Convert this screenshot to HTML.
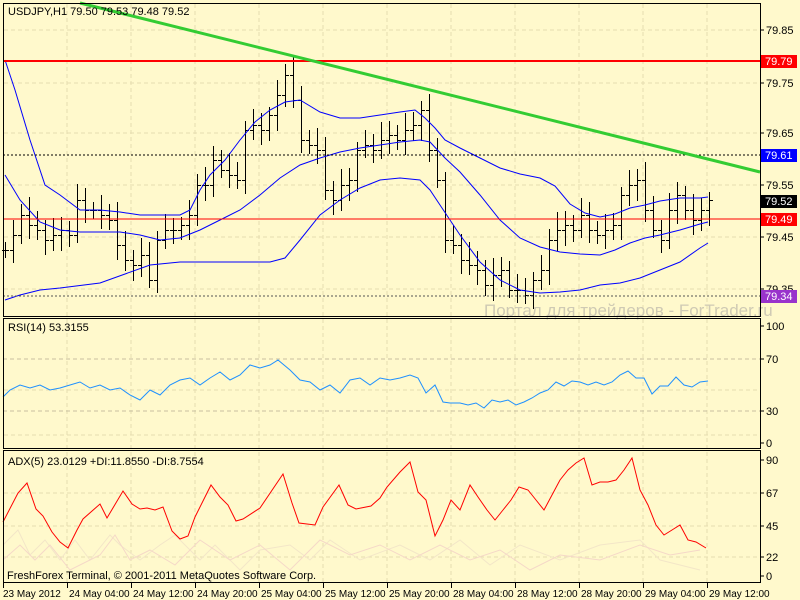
<!DOCTYPE html>
<html><head><meta charset="utf-8"><style>
body{margin:0;width:800px;height:600px;overflow:hidden;background:#FFF9CC;font-family:"Liberation Sans",sans-serif}
svg{display:block}
text{font-family:"Liberation Sans","DejaVu Sans",sans-serif;font-size:11px;fill:#000}
#dates text{font-size:10px}
</style></head><body>
<svg id="s" width="800" height="600" xmlns="http://www.w3.org/2000/svg">
<rect width="800" height="600" fill="#FFF9CC"/>
<g id="grid" stroke="#E6DDB0" stroke-dasharray="4,3" stroke-width="1"></g>
<line x1="3" y1="359" x2="760" y2="359" stroke="#C8C0A0" stroke-dasharray="4,3"/>
<line x1="3" y1="411" x2="760" y2="411" stroke="#C8C0A0" stroke-dasharray="4,3"/>
<g id="bars" stroke="#000" stroke-width="1"></g>
<g fill="none" stroke="#0000FF" stroke-width="1">
<polyline points="5,60 15,90 30,140 45,185 60,195 80,210 100,210 120,212 140,215 160,215 180,215 190,210 200,190 210,175 225,160 240,140 255,122 270,110 285,102 300,100 320,112 340,118 360,118 380,115 400,112 415,110 425,118 435,128 445,140 460,148 480,158 500,168 520,174 540,178 555,186 570,204 585,213 600,217 615,214 630,208 645,205 660,201 680,198 700,198 708,197"/>
<polyline points="5,175 20,200 40,222 60,230 80,232 100,232 120,232 140,235 160,240 180,238 200,230 220,220 240,210 260,195 280,178 300,165 320,158 340,152 360,148 380,145 400,142 420,140 430,142 445,158 460,172 480,195 500,220 520,238 540,247 560,252 580,254 600,255 615,250 630,243 645,238 660,235 680,230 700,224 708,222"/>
<polyline points="5,300 20,295 40,290 60,288 100,283 150,265 180,262 230,262 270,262 285,258 300,240 320,215 340,200 360,188 380,180 400,178 420,180 430,190 440,205 460,235 480,262 500,280 520,290 540,293 560,292 580,290 600,285 620,283 640,278 660,270 680,262 700,248 708,243"/>
</g>
<line x1="3" y1="61" x2="760" y2="61" stroke="#FF0000" stroke-width="2"/>
<line x1="3" y1="219" x2="760" y2="219" stroke="#FF0000" stroke-width="1"/>
<line x1="3" y1="155" x2="760" y2="155" stroke="#000" stroke-dasharray="2,2"/>
<line x1="3" y1="296" x2="760" y2="296" stroke="#555" stroke-dasharray="2,2"/>
<line x1="80" y1="3" x2="760" y2="172" stroke="#33CC33" stroke-width="3"/>
<text x="8" y="15">USDJPY,H1  79.50 79.53 79.48 79.52</text>
<text x="484" y="316" style="font-size:17px;fill:#CFCAB4">Портал для трейдеров - ForTrader.ru</text>
<polyline fill="none" stroke="#1E90FF" stroke-width="1" points="3,397 10,390 20,385 30,388 40,385 50,390 60,388 70,385 80,382 90,388 100,385 110,390 120,388 130,395 140,400 150,390 160,395 170,385 180,380 190,378 200,385 210,378 220,372 230,380 240,375 250,365 260,368 270,365 278,360 290,370 300,380 310,382 320,390 330,385 340,393 350,380 360,378 370,385 380,378 390,380 400,378 410,375 418,378 426,393 435,385 443,402 450,403 460,403 468,405 476,403 484,408 492,400 500,402 508,400 516,405 524,402 532,398 540,393 548,390 556,382 564,386 572,381 580,382 588,385 596,382 604,385 612,382 620,375 628,371 636,378 644,378 652,394 660,386 668,386 676,377 684,385 692,387 700,382 708,381"/>
<text x="8" y="331">RSI(14) 53.3155</text>
<polyline fill="none" stroke="#F3E6C8" stroke-width="1" points="3,545 18,530 30,555 45,540 60,560 75,540 90,560 110,535 120,545 140,560 160,545 175,535 200,560 215,545 240,570 260,550 290,545 310,560 330,540 360,560 400,545 430,560 460,540 490,565 520,545 560,560 600,545 640,540 660,560 700,570"/>
<polyline fill="none" stroke="#F5D8C8" stroke-width="1" points="3,560 20,545 35,560 50,545 70,570 100,555 115,535 130,560 150,550 175,565 200,540 230,560 260,545 290,570 320,540 350,555 380,545 410,560 440,545 470,560 500,550 530,570 560,555 600,560 640,545 670,555 700,550"/>
<polyline fill="none" stroke="#FF0000" stroke-width="1" points="3,522 18,493 27,483 36,509 43,516 52,532 60,542 68,548 77,530 83,519 100,504 107,518 123,491 132,504 140,509 147,508 155,510 163,507 172,531 180,539 188,536 195,517 211,485 220,497 228,505 236,521 243,519 260,508 283,474 292,503 299,523 315,525 323,507 339,485 348,505 356,509 371,506 380,498 387,487 400,472 410,462 418,492 426,500 435,536 443,520 451,500 460,510 470,485 478,497 487,510 495,520 503,510 511,500 519,487 528,490 536,500 544,510 552,495 560,480 568,470 576,463 584,458 592,485 600,482 608,482 616,480 624,470 632,458 640,490 648,505 656,525 664,535 672,530 680,525 688,540 696,542 706,548"/>
<text x="8" y="465">ADX(5) 23.0129 +DI:11.8550 -DI:8.7554</text>
<text x="7" y="579">FreshForex Terminal, © 2001-2011 MetaQuotes Software Corp.</text>
<g fill="none" stroke="#000" stroke-width="1">
<rect x="3.5" y="3.5" width="757" height="313"/>
<rect x="3.5" y="318.5" width="757" height="130"/>
<rect x="3.5" y="450.5" width="757" height="132"/>
</g>
<g id="scale"></g>
<g id="dates"></g>
<rect x="761" y="55" width="36" height="13" fill="#FF0000"/><text x="765" y="65" style="fill:#fff">79.79</text>
<rect x="761" y="149" width="36" height="13" fill="#0000FF"/><text x="765" y="159" style="fill:#fff">79.61</text>
<rect x="761" y="195" width="36" height="13" fill="#000"/><text x="765" y="205" style="fill:#fff">79.52</text>
<rect x="761" y="213" width="36" height="13" fill="#FF0000"/><text x="765" y="223" style="fill:#fff">79.49</text>
<rect x="761" y="290" width="36" height="13" fill="#9933CC"/><text x="765" y="300" style="fill:#fff">79.34</text>
</svg>
<script>
var NS="http://www.w3.org/2000/svg";
function el(p,t,a,txt){var e=document.createElementNS(NS,t);for(var k in a)e.setAttribute(k,a[k]);if(txt)e.textContent=txt;document.getElementById(p).appendChild(e);return e;}
var c=[250,235,215,225,230,240,235,230,235,200,210,210,215,220,245,260,265,255,280,240,230,230,225,215,185,185,160,170,175,180,130,125,130,115,95,75,100,140,145,150,190,200,185,180,150,145,150,140,135,140,130,125,110,150,180,240,245,260,265,270,285,275,270,290,290,295,280,270,240,230,225,230,215,230,235,230,225,195,185,180,210,230,240,210,195,210,220,210,200];
var gx=[67,131,195,259,323,387,451,515,579,643,707];
gx.forEach(function(x){el('grid','line',{x1:x,y1:4,x2:x,y2:582});});
[30,83,133,185,237,289,390,435,493,526,557].forEach(function(y){el('grid','line',{x1:4,y1:y,x2:760,y2:y});});
for(var i=0;i<c.length;i++){var x=5+i*8,o=(i?c[i-1]:c[0]),cl=c[i];var hi=Math.min(o,cl)-8-(i*7%11),lo=Math.max(o,cl)+8+(i*5%9);
el('bars','line',{x1:x+.5,y1:hi,x2:x+.5,y2:lo});el('bars','line',{x1:x-3,y1:o+.5,x2:x,y2:o+.5});el('bars','line',{x1:x+1,y1:cl+.5,x2:x+4,y2:cl+.5});}
[["79.85",30],["79.75",83],["79.65",133],["79.55",185],["79.45",237],["79.35",289],["100",326],["70",359],["30",411],["0",443],["90",460],["67",493],["45",526],["22",557],["0",576]].forEach(function(t){el('scale','line',{x1:760,y1:t[1],x2:764,y2:t[1],stroke:'#000'});el('scale','text',{x:766,y:t[1]+4},t[0]);});
var dl=["23 May 2012","24 May 04:00","24 May 12:00","24 May 20:00","25 May 04:00","25 May 12:00","25 May 20:00","28 May 04:00","28 May 12:00","28 May 20:00","29 May 04:00","29 May 12:00"];
dl.forEach(function(t,i){var x=3+i*64;el('dates','line',{x1:x+.5,y1:583,x2:x+.5,y2:588,stroke:'#000'});el('dates','text',{x:x+(i?2:0),y:597},t);});
</script>
</body></html>
